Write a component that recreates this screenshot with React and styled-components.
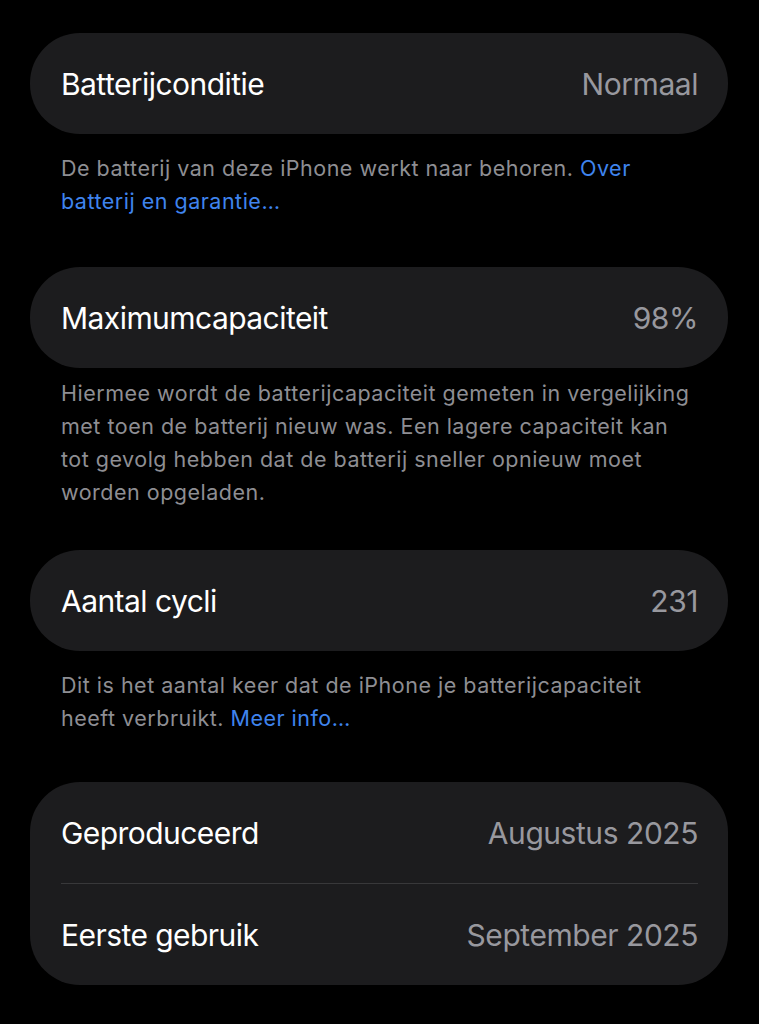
import styled, { createGlobalStyle } from "styled-components";

const GlobalStyle = createGlobalStyle`
  html, body {
    margin: 0;
    padding: 0;
    background: #000;
  }
  body {
    font-family: Inter, "Noto Sans", "Liberation Sans", sans-serif;
    -webkit-font-smoothing: antialiased;
  }
`;

const Page = styled.main`
  width: 759px;
  min-height: 1024px;
  box-sizing: border-box;
  padding: 33px 31px 0 30px;
  display: flex;
  flex-direction: column;
`;

const Card = styled.section`
  background: #1c1c1e;
  border-radius: 50px;
  display: flex;
  flex-direction: column;
  padding: 0 30px 0 31px;
`;

const Row = styled.div`
  height: 101px;
  display: flex;
  align-items: center;
  justify-content: space-between;
  & + & {
    border-top: 1px solid #38383a;
  }
`;

const Label = styled.span`
  color: #fff;
  font-size: 30px;
  letter-spacing: -0.55px;
`;

const Value = styled.span`
  color: #98989e;
  font-size: 30px;
  letter-spacing: -0.45px;
`;

const Footer = styled.p`
  margin: 0;
  padding: ${(p) => p.$top}px 34px ${(p) => p.$bottom}px 31px;
  color: #8e8e93;
  font-size: 21.5px;
  line-height: 33px;
  letter-spacing: 0.5px;
`;

const Link = styled.a`
  color: #3f84ee;
  text-decoration: none;
`;

export default function App() {
  return (
    <>
      <GlobalStyle />
      <Page>
        <Card>
          <Row>
            <Label>Batterijconditie</Label>
            <Value>Normaal</Value>
          </Row>
        </Card>
        <Footer $top={18} $bottom={49}>
          De batterij van deze iPhone werkt naar behoren.{" "}
          <Link>Over batterij en garantie…</Link>
        </Footer>

        <Card>
          <Row>
            <Label>Maximumcapaciteit</Label>
            <Value>98%</Value>
          </Row>
        </Card>
        <Footer $top={9} $bottom={41}>
          Hiermee wordt de batterijcapaciteit gemeten in vergelijking met toen
          de batterij nieuw was. Een lagere capaciteit kan tot gevolg hebben dat
          de batterij sneller opnieuw moet worden opgeladen.
        </Footer>

        <Card>
          <Row>
            <Label>Aantal cycli</Label>
            <Value>231</Value>
          </Row>
        </Card>
        <Footer $top={18} $bottom={47}>
          Dit is het aantal keer dat de iPhone je batterijcapaciteit heeft
          verbruikt. <Link>Meer info…</Link>
        </Footer>

        <Card>
          <Row>
            <Label>Geproduceerd</Label>
            <Value>Augustus 2025</Value>
          </Row>
          <Row>
            <Label>Eerste gebruik</Label>
            <Value>September 2025</Value>
          </Row>
        </Card>
      </Page>
    </>
  );
}
